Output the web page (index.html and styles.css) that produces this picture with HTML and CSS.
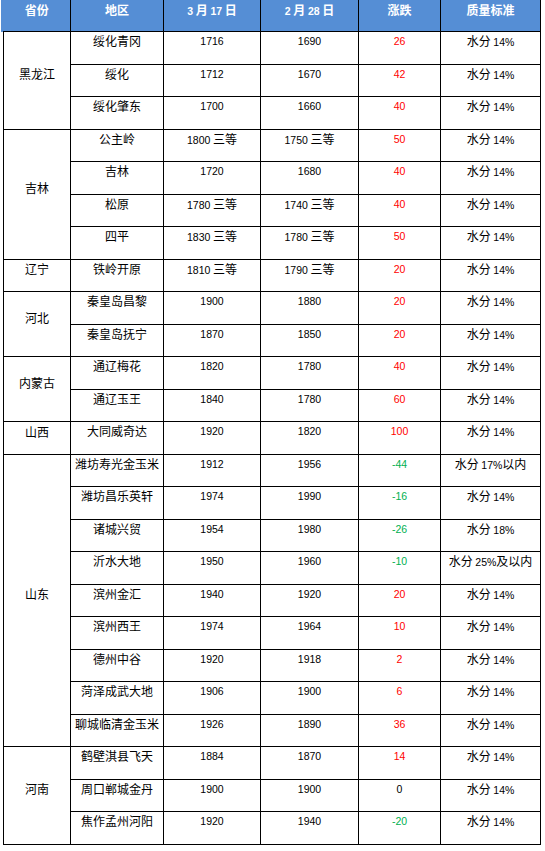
FILE: index.html
```html
<!DOCTYPE html>
<html lang="zh">
<head>
<meta charset="utf-8">
<title>玉米价格</title>
<link rel="stylesheet" href="styles.css">
</head>
<body>
<table class="price">
<colgroup>
<col class="c1"><col class="c2"><col class="c3"><col class="c4"><col class="c5"><col class="c6">
</colgroup>
<thead>
<tr>
<th>省份</th><th>地区</th><th><span class="d">3</span> 月 <span class="d">17</span> 日</th><th><span class="d">2</span> 月 <span class="d">28</span> 日</th><th>涨跌</th><th>质量标准</th>
</tr>
</thead>
<tbody>
<tr><td class="p" rowspan="3">黑龙江</td><td>绥化青冈</td><td class="d">1716</td><td class="d">1690</td><td class="d r">26</td><td>水分 <span class="d">14%</span></td></tr>
<tr><td>绥化</td><td class="d">1712</td><td class="d">1670</td><td class="d r">42</td><td>水分 <span class="d">14%</span></td></tr>
<tr><td>绥化肇东</td><td class="d">1700</td><td class="d">1660</td><td class="d r">40</td><td>水分 <span class="d">14%</span></td></tr>

<tr><td class="p" rowspan="4">吉林</td><td>公主岭</td><td><span class="d">1800</span> 三等</td><td><span class="d">1750</span> 三等</td><td class="d r">50</td><td>水分 <span class="d">14%</span></td></tr>
<tr><td>吉林</td><td class="d">1720</td><td class="d">1680</td><td class="d r">40</td><td>水分 <span class="d">14%</span></td></tr>
<tr><td>松原</td><td><span class="d">1780</span> 三等</td><td><span class="d">1740</span> 三等</td><td class="d r">40</td><td>水分 <span class="d">14%</span></td></tr>
<tr><td>四平</td><td><span class="d">1830</span> 三等</td><td><span class="d">1780</span> 三等</td><td class="d r">50</td><td>水分 <span class="d">14%</span></td></tr>

<tr><td class="p">辽宁</td><td>铁岭开原</td><td><span class="d">1810</span> 三等</td><td><span class="d">1790</span> 三等</td><td class="d r">20</td><td>水分 <span class="d">14%</span></td></tr>

<tr><td class="p" rowspan="2">河北</td><td>秦皇岛昌黎</td><td class="d">1900</td><td class="d">1880</td><td class="d r">20</td><td>水分 <span class="d">14%</span></td></tr>
<tr><td>秦皇岛抚宁</td><td class="d">1870</td><td class="d">1850</td><td class="d r">20</td><td>水分 <span class="d">14%</span></td></tr>

<tr><td class="p" rowspan="2">内蒙古</td><td>通辽梅花</td><td class="d">1820</td><td class="d">1780</td><td class="d r">40</td><td>水分 <span class="d">14%</span></td></tr>
<tr><td>通辽玉王</td><td class="d">1840</td><td class="d">1780</td><td class="d r">60</td><td>水分 <span class="d">14%</span></td></tr>

<tr><td class="p">山西</td><td>大同威奇达</td><td class="d">1920</td><td class="d">1820</td><td class="d r">100</td><td>水分 <span class="d">14%</span></td></tr>

<tr><td class="p" rowspan="9">山东</td><td>潍坊寿光金玉米</td><td class="d">1912</td><td class="d">1956</td><td class="d g">-44</td><td>水分 <span class="d">17%</span>以内</td></tr>
<tr><td>潍坊昌乐英轩</td><td class="d">1974</td><td class="d">1990</td><td class="d g">-16</td><td>水分 <span class="d">14%</span></td></tr>
<tr><td>诸城兴贸</td><td class="d">1954</td><td class="d">1980</td><td class="d g">-26</td><td>水分 <span class="d">18%</span></td></tr>
<tr><td>沂水大地</td><td class="d">1950</td><td class="d">1960</td><td class="d g">-10</td><td>水分 <span class="d">25%</span>及以内</td></tr>
<tr><td>滨州金汇</td><td class="d">1940</td><td class="d">1920</td><td class="d r">20</td><td>水分 <span class="d">14%</span></td></tr>
<tr><td>滨州西王</td><td class="d">1974</td><td class="d">1964</td><td class="d r">10</td><td>水分 <span class="d">14%</span></td></tr>
<tr><td>德州中谷</td><td class="d">1920</td><td class="d">1918</td><td class="d r">2</td><td>水分 <span class="d">14%</span></td></tr>
<tr><td>菏泽成武大地</td><td class="d">1906</td><td class="d">1900</td><td class="d r">6</td><td>水分 <span class="d">14%</span></td></tr>
<tr><td>聊城临清金玉米</td><td class="d">1926</td><td class="d">1890</td><td class="d r">36</td><td>水分 <span class="d">14%</span></td></tr>

<tr><td class="p" rowspan="3">河南</td><td>鹤壁淇县飞天</td><td class="d">1884</td><td class="d">1870</td><td class="d r">14</td><td>水分 <span class="d">14%</span></td></tr>
<tr><td>周口郸城金丹</td><td class="d">1900</td><td class="d">1900</td><td class="d">0</td><td>水分 <span class="d">14%</span></td></tr>
<tr><td>焦作孟州河阳</td><td class="d">1920</td><td class="d">1940</td><td class="d g">-20</td><td>水分 <span class="d">14%</span></td></tr>
</tbody>
</table>
</body>
</html>
```

FILE: styles.css
```css
body {
  margin: 0;
  background: #ffffff;
}

.price {
  border-collapse: collapse;
  table-layout: fixed;
  width: 537px;
  margin-left: 3px;
  font-family: "Noto Sans CJK SC", sans-serif;
  font-size: 12px;
  color: #000000;
}

.c1 { width: 67px; }
.c2 { width: 93px; }
.c3 { width: 97px; }
.c4 { width: 98px; }
.c5 { width: 82px; }
.c6 { width: 100px; }

.price th,
.price td {
  border: 1px solid #000000;
  text-align: center;
  vertical-align: top;
  padding: 2px 0 0;
  line-height: 14px;
  white-space: nowrap;
}

.price td {
  height: 29.5px;
}

.price th {
  background: #558ed5;
  color: #ffffff;
  font-weight: bold;
  border-top: none;
  height: 28px;
  padding-top: 3px;
}

.price th:first-child {
  border-left: none;
  box-shadow: -3px 0 0 #558ed5;
}

.price td.p {
  height: auto;
  vertical-align: middle;
  padding: 0 0 12px;
}

.d {
  font-family: "Liberation Sans", sans-serif;
  font-size: 10.5px;
}

.r { color: #ff0000; }
.g { color: #00b050; }
```
